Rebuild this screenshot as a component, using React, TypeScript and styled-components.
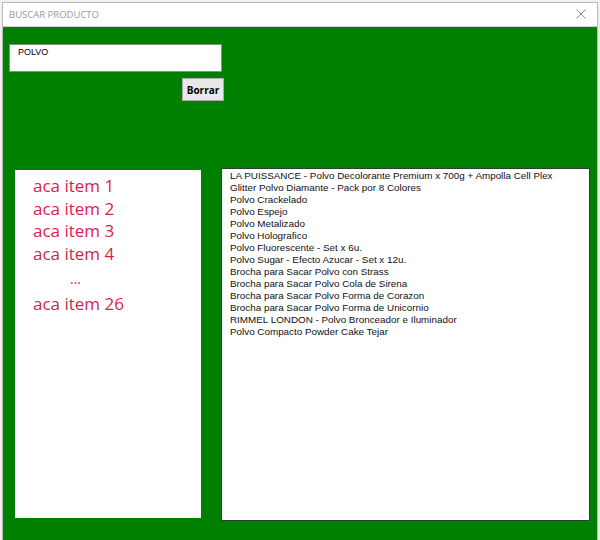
import styled, { createGlobalStyle } from 'styled-components';

const items = ['aca item 1', 'aca item 2', 'aca item 3', 'aca item 4'];

const results = [
  'LA PUISSANCE - Polvo Decolorante Premium x 700g + Ampolla Cell Plex',
  'Glitter Polvo Diamante - Pack por 8 Colores',
  'Polvo Crackelado',
  'Polvo Espejo',
  'Polvo Metalizado',
  'Polvo Holografico',
  'Polvo Fluorescente - Set x 6u.',
  'Polvo Sugar - Efecto Azucar - Set x 12u.',
  'Brocha para Sacar Polvo con Strass',
  'Brocha para Sacar Polvo Cola de Sirena',
  'Brocha para Sacar Polvo Forma de Corazon',
  'Brocha para Sacar Polvo Forma de Unicornio',
  'RIMMEL LONDON - Polvo Bronceador e Iluminador',
  'Polvo Compacto Powder Cake Tejar',
];

const App = () => {
  return (
    <>
      <GlobalStyle />
      <Window>
        <TitleBar>
          <Title>BUSCAR PRODUCTO</Title>
          <CloseIcon viewBox="0 0 10 10">
            <path d="M0.5 0.5 L9.5 9.5 M9.5 0.5 L0.5 9.5" />
          </CloseIcon>
        </TitleBar>
        <Content>
          <SearchBox>
            <TextBox defaultValue="POLVO" />
            <ClearButton type="button">Borrar</ClearButton>
          </SearchBox>
          <Lists>
            <ItemList>
              {items.map((item) => (
                <Item key={item}>{item}</Item>
              ))}
              <Dots>...</Dots>
              <Item>aca item 26</Item>
            </ItemList>
            <ResultList>
              {results.map((r) => (
                <Result key={r}>{r}</Result>
              ))}
            </ResultList>
          </Lists>
        </Content>
      </Window>
    </>
  );
};

export default App;

const GlobalStyle = createGlobalStyle`
  html, body {
    margin: 0;
    background: #f0f0f0;
  }
  body {
    padding: 2px 2px 0 2px;
    height: 540px;
    box-sizing: border-box;
    overflow: hidden;
  }
`;

const Window = styled.div`
  display: flex;
  flex-direction: column;
  height: 538px;
  border: 1px solid #b9b9b9;
  border-bottom: none;
  background: #fff;
`;

const TitleBar = styled.div`
  display: flex;
  align-items: center;
  justify-content: space-between;
  height: 22px;
  padding: 0 11px 1px 6px;
  border-bottom: 1px solid #d4d4d4;
`;

const Title = styled.span`
  font-family: 'Open Sans', sans-serif;
  font-size: 9.5px;
  color: #9a9a9a;
`;

const CloseIcon = styled.svg`
  width: 10px;
  height: 10px;
  stroke: #8a8a8a;
  stroke-width: 1;
  fill: none;
`;

const Content = styled.div`
  flex: 1;
  background: #008000;
  padding: 17px 7px 0 6px;
`;

const SearchBox = styled.div`
  display: flex;
  flex-direction: column;
  width: 215px;
  gap: 6px;
`;

const TextBox = styled.input`
  width: 213px;
  height: 28px;
  box-sizing: border-box;
  border: 1px solid #7a9a7a;
  background: #fff;
  padding: 0 0 12px 8px;
  font-family: 'Liberation Sans', Arial, sans-serif;
  font-size: 9px;
  color: #000;
  outline: none;
`;

const ClearButton = styled.button`
  align-self: flex-end;
  width: 42px;
  height: 23px;
  padding: 0;
  border: 1px solid #adadad;
  background: #e8e8e8;
  font-family: 'Open Sans', sans-serif;
  font-weight: bold;
  font-size: 10px;
  color: #000;
`;

const Lists = styled.div`
  display: flex;
  align-items: flex-start;
  gap: 20px;
  margin-top: 67px;
`;

const ItemList = styled.div`
  width: 186px;
  height: 348px;
  margin: 2px 0 0 6px;
  background: #fff;
  padding: 5px 0 0 18px;
  box-sizing: border-box;
  display: flex;
  flex-direction: column;
`;

const Item = styled.div`
  font-family: 'Open Sans', sans-serif;
  font-size: 17px;
  line-height: 22.5px;
  color: #d81e4e;
`;

const Dots = styled(Item)`
  padding-left: 37px;
  line-height: 28px;
  font-size: 14px;
`;

const ResultList = styled.div`
  width: 369px;
  height: 353px;
  box-sizing: border-box;
  border: 1px solid #2f3f2f;
  background: #fff;
  padding: 1px 0 0 8px;
`;

const Result = styled.div`
  font-family: 'Liberation Sans', Arial, sans-serif;
  font-size: 9.85px;
  line-height: 12px;
  color: #111;
  white-space: nowrap;
`;
